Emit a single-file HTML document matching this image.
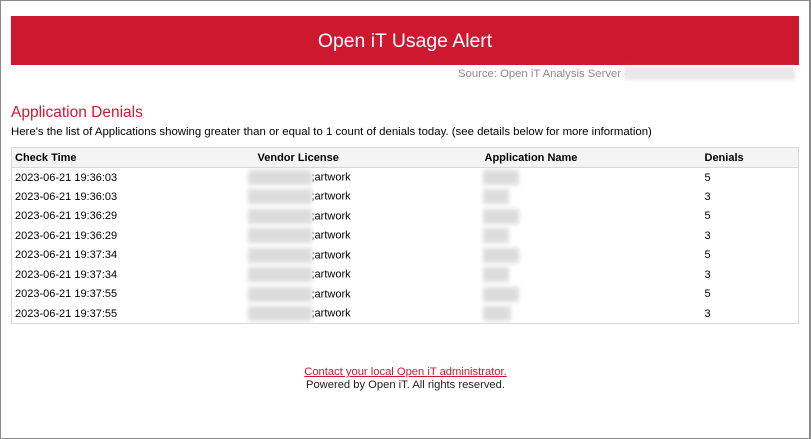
<!DOCTYPE html>
<html><head><meta charset="utf-8"><style>
*{margin:0;padding:0;box-sizing:border-box}
body{width:811px;height:439px;background:#fff;font-family:"Liberation Sans",sans-serif;position:relative;overflow:hidden}
.frame{position:absolute;left:0;top:0;width:811px;height:439px;border:1px solid #8a8a8a;border-right:2px solid #8a8a8a}
.banner{position:absolute;left:11px;top:16px;width:788px;height:49px;background:#ce1830;color:#fff;font-size:19.4px;text-align:center;line-height:50px}
.src{position:absolute;left:458px;top:67px;font-size:11.3px;color:#8a8a8a;line-height:14px;white-space:nowrap}
.srcblur{position:absolute;left:624px;top:67px;width:171px;height:13px;background:#e8e8e8;filter:blur(1.5px)}
h2{position:absolute;left:11px;top:104px;font-size:15.5px;font-weight:normal;color:#ce1830}
.sub{position:absolute;left:11px;top:126px;font-size:11.4px;color:#000;white-space:nowrap}
table{position:absolute;left:11px;top:147px;width:788px;border:1px solid #d8d8d8;border-collapse:collapse;font-size:11px}
th{background:#f4f4f4;text-align:left;font-weight:bold;height:20px;border-bottom:1px solid #d8d8d8;padding:0}
td{height:19.5px;padding:0}
.c1{padding-left:3px;width:245px}
.c2{width:228px;padding-left:1px}
.c3{width:220px}
.b{display:inline-block;vertical-align:middle;background:#dcdcdc;filter:blur(2px);height:15px}
.f1{position:absolute;left:0;width:811px;top:366px;text-align:center;font-size:11.2px;color:#ce1830;text-decoration:underline}
.f2{position:absolute;left:0;width:811px;top:379px;text-align:center;font-size:11.2px;color:#222}
</style></head><body>
<div class="frame"></div>
<div class="banner">Open iT Usage Alert</div>
<div class="src">Source: Open iT Analysis Server -</div>
<div class="srcblur"></div>
<h2>Application Denials</h2>
<div class="sub">Here's the list of Applications showing greater than or equal to 1 count of denials today. (see details below for more information)</div>
<table>
<tr><th class="c1">Check Time</th><th class="c2">Vendor License</th><th class="c3">Application Name</th><th>Denials</th></tr>
<tr><td class="c1">2023-06-21 19:36:03</td><td><span class="b" style="width:64px;margin-left:-9px"></span>;artwork</td><td><span class="b" style="width:36px;margin-left:-2px"></span></td><td>5</td></tr>
<tr><td class="c1">2023-06-21 19:36:03</td><td><span class="b" style="width:64px;margin-left:-9px"></span>;artwork</td><td><span class="b" style="width:26px;margin-left:-2px"></span></td><td>3</td></tr>
<tr><td class="c1">2023-06-21 19:36:29</td><td><span class="b" style="width:64px;margin-left:-9px"></span>;artwork</td><td><span class="b" style="width:36px;margin-left:-2px"></span></td><td>5</td></tr>
<tr><td class="c1">2023-06-21 19:36:29</td><td><span class="b" style="width:64px;margin-left:-9px"></span>;artwork</td><td><span class="b" style="width:26px;margin-left:-2px"></span></td><td>3</td></tr>
<tr><td class="c1">2023-06-21 19:37:34</td><td><span class="b" style="width:64px;margin-left:-9px"></span>;artwork</td><td><span class="b" style="width:36px;margin-left:-2px"></span></td><td>5</td></tr>
<tr><td class="c1">2023-06-21 19:37:34</td><td><span class="b" style="width:64px;margin-left:-9px"></span>;artwork</td><td><span class="b" style="width:26px;margin-left:-2px"></span></td><td>3</td></tr>
<tr><td class="c1">2023-06-21 19:37:55</td><td><span class="b" style="width:64px;margin-left:-9px"></span>;artwork</td><td><span class="b" style="width:36px;margin-left:-2px"></span></td><td>5</td></tr>
<tr><td class="c1">2023-06-21 19:37:55</td><td><span class="b" style="width:64px;margin-left:-9px"></span>;artwork</td><td><span class="b" style="width:28px;margin-left:-2px"></span></td><td>3</td></tr>
</table>
<div class="f1">Contact your local Open iT administrator.</div>
<div class="f2">Powered by Open iT. All rights reserved.</div>
</body></html>
